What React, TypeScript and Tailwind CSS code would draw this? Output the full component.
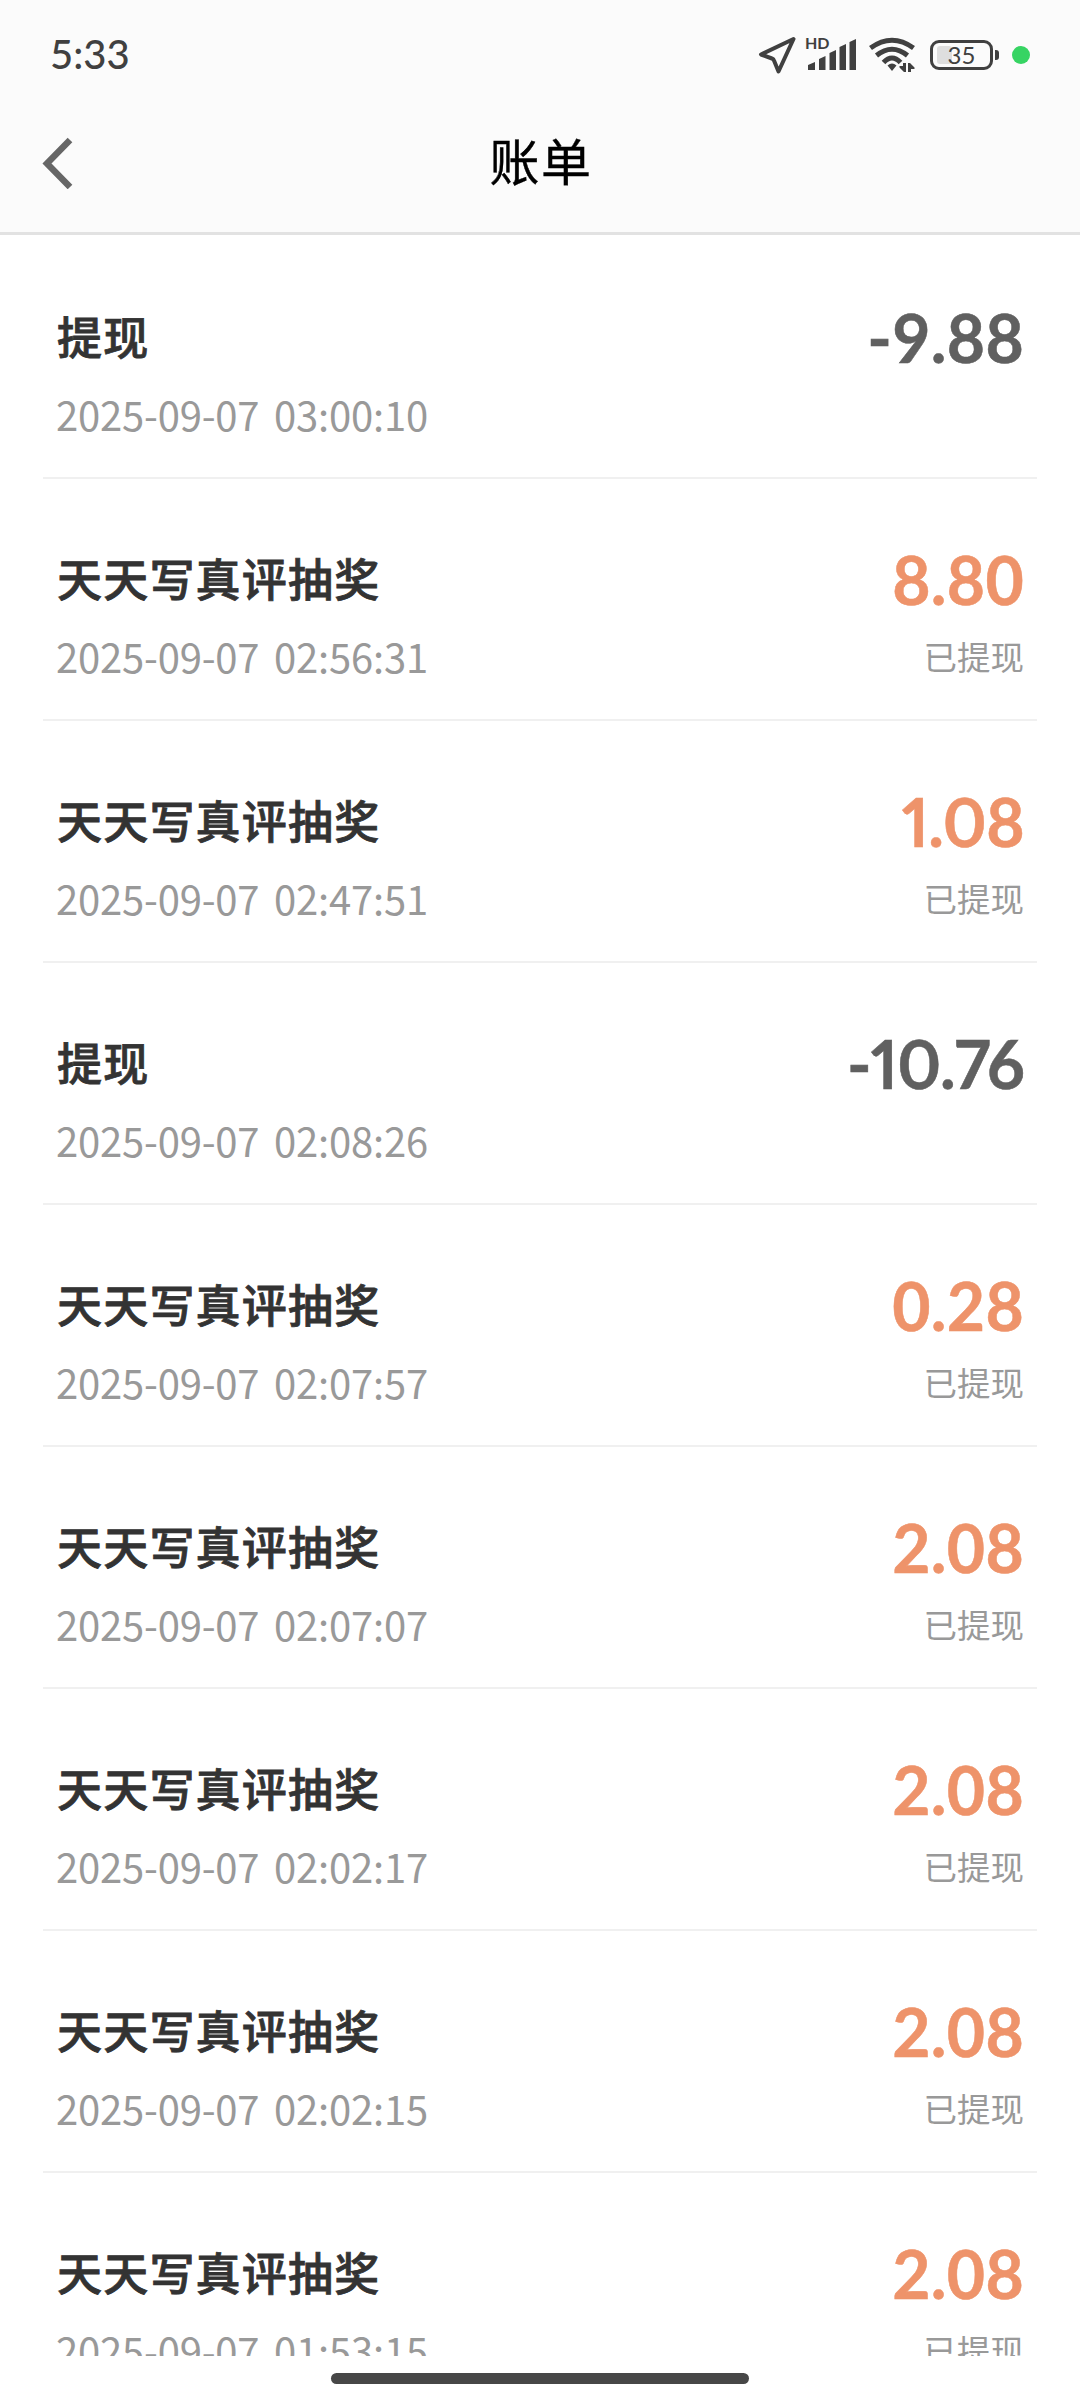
type Bill = {
  title: string;
  time: string;
  amount: string;
  status?: string;
};

const bills: Bill[] = [
  { title: "提现", time: "2025-09-07 03:00:10", amount: "-9.88" },
  { title: "天天写真评抽奖", time: "2025-09-07 02:56:31", amount: "8.80", status: "已提现" },
  { title: "天天写真评抽奖", time: "2025-09-07 02:47:51", amount: "1.08", status: "已提现" },
  { title: "提现", time: "2025-09-07 02:08:26", amount: "-10.76" },
  { title: "天天写真评抽奖", time: "2025-09-07 02:07:57", amount: "0.28", status: "已提现" },
  { title: "天天写真评抽奖", time: "2025-09-07 02:07:07", amount: "2.08", status: "已提现" },
  { title: "天天写真评抽奖", time: "2025-09-07 02:02:17", amount: "2.08", status: "已提现" },
  { title: "天天写真评抽奖", time: "2025-09-07 02:02:15", amount: "2.08", status: "已提现" },
  { title: "天天写真评抽奖", time: "2025-09-07 01:53:15", amount: "2.08", status: "已提现" },
];

export default function App() {
  return (
    <div className="flex h-[2400px] w-[1080px] flex-col overflow-hidden bg-white font-['Lato','Noto_Sans_CJK_SC',sans-serif]">
      <header className="h-[235px] shrink-0 border-b-[3px] border-[#e2e2e2] bg-[#fbfbfb]">
        <StatusBar />
        <div className="grid h-[106px] grid-cols-[1fr_auto_1fr] items-center">
          <button aria-label="返回" className="pl-[42px]">
            <svg width="32" height="52" viewBox="0 0 32 52" fill="none" stroke="#666" strokeWidth="6.5">
              <path d="M28 3 5 26.500 28 50" />
            </svg>
          </button>
          <h1 className="pb-[3px] pl-[2px] text-[50px] leading-[60px] tracking-[1.500px] text-black [-webkit-text-stroke:0.4px]">
            账单
          </h1>
        </div>
      </header>

      <main className="min-h-0 flex-1 overflow-hidden px-[43px] pt-[2px]">
        {bills.map((bill) => (
          <BillRow key={bill.time} bill={bill} />
        ))}
      </main>

      <footer className="flex h-11 shrink-0 justify-center pt-[17px]">
        <div className="h-[11px] w-[418px] rounded-full bg-[#474747]" />
      </footer>
    </div>
  );
}

function BillRow({ bill }: { bill: Bill }) {
  const isIncome = !bill.amount.startsWith("-");
  // a "1" looks too wide with fixed-width figures
  const hasOne = bill.amount.includes("1");
  return (
    <section className="h-[242px] border-b-2 border-[#f0f0f0] pr-[13px] pl-[13px] pt-[71px]">
      <div className="flex h-[60px] items-center justify-between">
        <h2 className="pl-px text-[45px] leading-[60px] font-medium tracking-[1.200px] text-[#333] [-webkit-text-stroke:0.8px]">
          {bill.title}
        </h2>
        <span
          className={`text-[66px] leading-[60px] font-bold [-webkit-text-stroke:0.5px] ${
            hasOne ? "tracking-[-0.800px] proportional-nums" : "tracking-[0.300px] tabular-nums"
          } ${isIncome ? "text-[#ee936a]" : "text-[#606060]"}`}
        >
          {bill.amount}
        </span>
      </div>
      <div className="mt-[22px] flex h-12 items-center justify-between text-[#999]">
        <time className="font-['Noto_Sans_CJK_SC',sans-serif] text-[40px] leading-[46px] tracking-[-0.200px] [word-spacing:6px]">
          {bill.time}
        </time>
        {bill.status && <span className="pt-px text-[33.500px] leading-[48px]">{bill.status}</span>}
      </div>
    </section>
  );
}

function StatusBar() {
  return (
    <div className="flex h-[110px] items-center justify-between pr-[50px] pl-[50px] text-[#404040]">
      <span className="pb-[2px] text-[40px] leading-none font-medium">5:33</span>
      <div className="flex items-center">
        <LocationIcon />
        <SignalIcon />
        <WifiIcon />
        <Battery />
        <span className="ml-[13px] h-[18px] w-[18px] rounded-full bg-[#37d463]" />
      </div>
    </div>
  );
}

function LocationIcon() {
  return (
    <svg width="38" height="40" viewBox="0 0 38 40" fill="none" stroke="currentColor" strokeWidth="4" strokeLinejoin="round">
      <path d="M35.500 4 3 19.500 14 23.500Q15.500 24 16 25.500L20.500 36.500Z" />
    </svg>
  );
}

function SignalIcon() {
  return (
    <div className="relative ml-[8px] h-10 w-[52px]">
      <span className="absolute top-0 left-[1px] text-[16px] leading-none font-bold">HD</span>
      <svg className="absolute inset-0" width="52" height="40" viewBox="0 0 52 40" fill="currentColor">
        <path d="M4 30l7-3v8h-7zM15 24l6.500-3v14h-6.500zM25.500 18l6.500-3v20h-6.500zM35.500 12l6.500-3v26h-6.500zM45.500 7l6.500-3v31h-6.500z" />
      </svg>
    </div>
  );
}

function WifiIcon() {
  return (
    <svg className="ml-[12px]" width="48" height="40" viewBox="0 0 48 40" fill="none" stroke="currentColor" strokeWidth="5">
      <path d="M2.500 13Q24-2.500 45.500 13M8.500 20.500Q24 8 39.500 20.500M15.500 27.500Q24 18.500 32.500 27.500" />
      <path d="M19.500 30.500Q24 26.500 28.500 30.500L24 36Z" fill="currentColor" stroke="none" />
      <path d="M38 28v9h-2l-4.500-4.500v-1.500h3.500v-3zM40 37v-9h2l4.500 4.500v1.500h-3.500v3z" fill="currentColor" stroke="none" />
    </svg>
  );
}

function Battery() {
  return (
    <div className="ml-[14px] flex items-center gap-[2px]">
      <div className="relative flex h-[30px] w-[63px] items-center justify-center rounded-[9px] border-[3px] border-current">
        <div className="absolute top-[3px] bottom-[3px] left-[4px] w-[15px] rounded-[3px] bg-[#dedede]" />
        <span className="relative pb-[1px] text-[24px] leading-none">35</span>
      </div>
      <div className="h-[10px] w-[4px] rounded-r-[3px] bg-current" />
    </div>
  );
}
